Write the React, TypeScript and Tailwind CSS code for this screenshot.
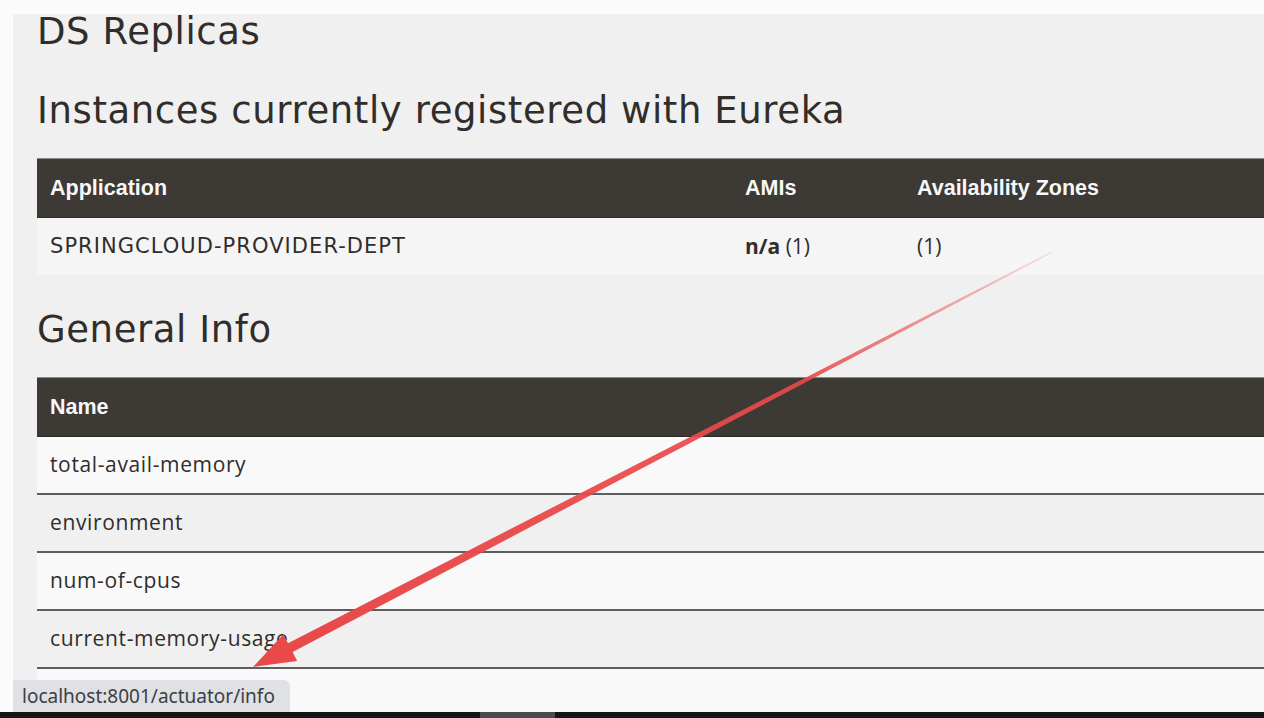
const heading = "font-['DejaVu_Sans',sans-serif] text-[37px] leading-[36px] text-[#302d2b] tracking-[0.016em]";
const headCell = "font-['Liberation_Sans',Arial,sans-serif] font-bold text-[21.5px] text-[#f7f7f7] pl-[13px]";

const infoRows = [
  { name: "total-avail-memory", bg: "bg-[#f9f9f9]" },
  { name: "environment", bg: "bg-[#f0f0f0]" },
  { name: "num-of-cpus", bg: "bg-[#f9f9f9]" },
  { name: "current-memory-usage", bg: "bg-[#f0f0f0]" },
  { name: "", bg: "bg-[#f9f9f9]" },
];

const Arrow = () => (
  <svg
    className="absolute inset-0 pointer-events-none"
    width="1264"
    height="718"
    viewBox="0 0 1264 718"
  >
    <defs>
      <linearGradient id="fade" x1="1052" y1="252" x2="253" y2="667" gradientUnits="userSpaceOnUse">
        <stop offset="0" stopColor="#ea4a4a" stopOpacity="0.15" />
        <stop offset="0.3" stopColor="#ea4a4a" stopOpacity="0.9" />
        <stop offset="1" stopColor="#e84848" stopOpacity="1" />
      </linearGradient>
    </defs>
    <polygon
      fill="url(#fade)"
      points="1052.3,252.6 292.6,652 297.2,660.9 253,667 283.4,634.3 288,643.2 1051.7,251.4"
    />
  </svg>
);

export default function App() {
  return (
    <div className="relative w-[1264px] h-[718px] overflow-hidden bg-[#fbfbfb] pt-[14px] pl-[13px]">
      <div className="flex flex-col h-[698px] bg-[#f0f0f0] pl-[24px]">
        <h2 className={heading}>DS Replicas</h2>
        <h2 className={`${heading} mt-[43px]`}>Instances currently registered with Eureka</h2>

        <div className="mt-[29px] w-[1227px]">
          <div className="grid grid-cols-[695px_172px_1fr] items-center h-[60px] bg-[#3d3935] border-t border-[#8c8a86] border-b border-b-[#2c2926]">
            <div className={headCell}>Application</div>
            <div className={headCell}>AMIs</div>
            <div className={headCell}>Availability Zones</div>
          </div>
          <div className="grid grid-cols-[695px_172px_1fr] items-center h-[57px] bg-[#f5f5f5]">
            <div className="pl-[13px] font-['DejaVu_Sans',sans-serif] text-[21px] tracking-[0.05em] text-[#302d2b]">
              SPRINGCLOUD-PROVIDER-DEPT
            </div>
            <div className="pl-[13px] font-['Open_Sans',sans-serif] text-[21px] text-[#302d2b]">
              <b className="font-bold">n/a</b> (1)
            </div>
            <div className="pl-[13px] font-['Open_Sans',sans-serif] text-[21px] text-[#302d2b]">(1)</div>
          </div>
        </div>

        <h2 className={`${heading} mt-[37px]`}>General Info</h2>

        <div className="mt-[29px] w-[1227px]">
          <div className="flex items-center h-[60px] bg-[#3d3935] border-t border-[#8c8a86] border-b border-b-[#2c2926]">
            <div className={headCell}>Name</div>
          </div>
          {infoRows.map((r, i) => (
            <div
              key={i}
              className={`flex items-center h-[58px] ${r.bg} ${i < infoRows.length - 1 ? "border-b-2 border-[#5e5e5e]" : ""}`}
            >
              <span className="pl-[13px] font-['Open_Sans',sans-serif] text-[21px] tracking-[0.03em] text-[#302d2b]">
                {r.name}
              </span>
            </div>
          ))}
        </div>
      </div>

      <div className="absolute left-0 right-0 bottom-0 h-[6px] bg-[#151515] flex">
        <div className="ml-[480px] w-[75px] h-full bg-[#4a4a4a]" />
      </div>

      <div className="absolute left-[13px] bottom-[6px] h-[32px] w-[277px] bg-[#dfe1e5] rounded-tr-[6px] flex items-center pl-[9px]">
        <span className="font-['Noto_Sans',sans-serif] text-[19px] text-[#3c4043]">localhost:8001/actuator/info</span>
      </div>

      <Arrow />
    </div>
  );
}
